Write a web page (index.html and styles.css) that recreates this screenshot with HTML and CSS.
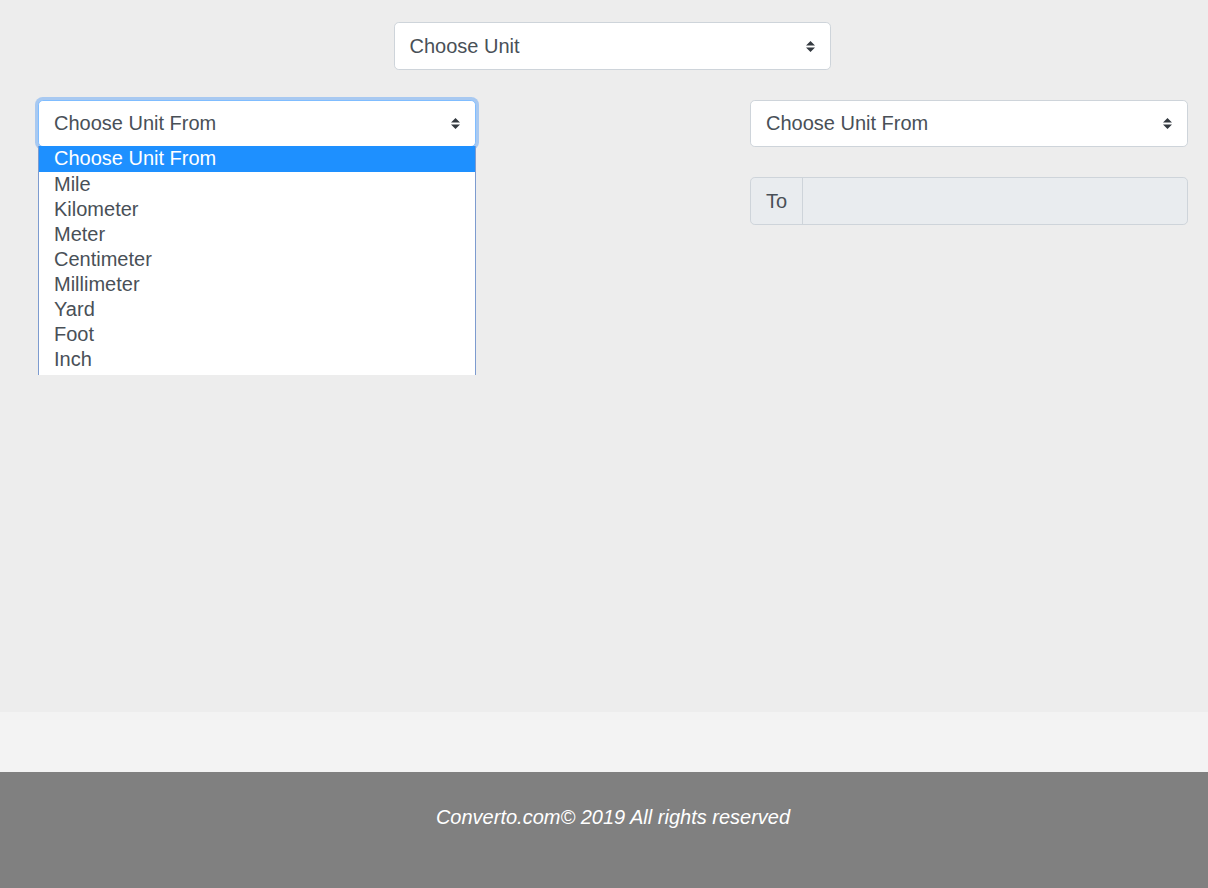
FILE: index.html
```html
<!DOCTYPE html>
<html lang="en">
<head>
<meta charset="utf-8">
<title>Converto</title>
<link rel="stylesheet" href="styles.css">
</head>
<body>
<main class="main">
  <div class="container">
    <div class="top-row">
      <div class="select select-top">
        <span class="select-text">Choose Unit</span>
        <svg class="caret" width="9" height="11" viewBox="0 0 9 11"><path d="M4.5 0 L9 4.5 H0 Z M0 6.5 H9 L4.5 11 Z" fill="#343a40"/></svg>
      </div>
    </div>
    <div class="cols">
      <div class="col">
        <div class="select focused">
          <span class="select-text">Choose Unit From</span>
          <svg class="caret" width="9" height="11" viewBox="0 0 9 11"><path d="M4.5 0 L9 4.5 H0 Z M0 6.5 H9 L4.5 11 Z" fill="#343a40"/></svg>
        </div>
        <ul class="dropdown">
          <li class="opt active">Choose Unit From</li>
          <li class="opt">Mile</li>
          <li class="opt">Kilometer</li>
          <li class="opt">Meter</li>
          <li class="opt">Centimeter</li>
          <li class="opt">Millimeter</li>
          <li class="opt">Yard</li>
          <li class="opt">Foot</li>
          <li class="opt">Inch</li>
        </ul>
      </div>
      <div class="col">
        <div class="select">
          <span class="select-text">Choose Unit From</span>
          <svg class="caret" width="9" height="11" viewBox="0 0 9 11"><path d="M4.5 0 L9 4.5 H0 Z M0 6.5 H9 L4.5 11 Z" fill="#343a40"/></svg>
        </div>
        <div class="input-group">
          <span class="prepend">To</span>
          <span class="readonly"></span>
        </div>
      </div>
    </div>
  </div>
</main>
<div class="band"></div>
<footer class="footer">
  <p class="copy">Converto.com© 2019 All rights reserved</p>
</footer>
</body>
</html>
```
FILE: styles.css
```css
* { box-sizing: border-box; }
html, body { margin: 0; padding: 0; }
body {
  background: #ededed;
  font-family: "Liberation Sans", Arial, sans-serif;
  color: #495057;
}
.main {
  height: 712px;
  padding-top: 22px;
}
.container {
  margin-left: 38px;
  width: 1150px;
}
.top-row {
  display: flex;
  justify-content: center;
  padding-right: 2px;
}
.select {
  position: relative;
  display: flex;
  align-items: center;
  justify-content: space-between;
  height: 47px;
  padding: 0 15px 1px 15px;
  background: #fff;
  border: 1px solid #ced4da;
  border-radius: 4.8px;
  font-size: 20px;
  line-height: 30px;
  color: #495057;
}
.select-top { width: 437px; height: 48px; }
.select.focused {
  border-color: #80bdff;
  box-shadow: 0 0 0 3px rgba(100, 165, 245, 0.5);
}
.caret { display: block; margin-top: 1px; }
.cols {
  display: flex;
  justify-content: space-between;
  margin-top: 30px;
}
.col {
  position: relative;
  width: 438px;
}
.dropdown {
  position: absolute;
  left: 0;
  top: 46px;
  width: 438px;
  margin: 0;
  padding: 0 0 3px;
  list-style: none;
  background: #fff;
  border-left: 1px solid #7d9bcf;
  border-right: 1px solid #7d9bcf;
  z-index: 5;
}
.opt {
  height: 25px;
  line-height: 24px;
  padding-left: 15px;
  font-size: 20px;
  color: #495057;
}
.opt.active {
  background: #1e90ff;
  color: #fff;
  height: 26px;
  line-height: 25px;
}
.input-group {
  display: flex;
  margin-top: 30px;
  height: 48px;
  border: 1px solid #ced4da;
  border-radius: 4.8px;
  background: #e9ecef;
  font-size: 20px;
}
.prepend {
  width: 52px;
  display: flex;
  align-items: center;
  justify-content: center;
  border-right: 1px solid #ced4da;
  color: #495057;
}
.readonly { flex: 1; }
.band {
  height: 60px;
  background: #f3f3f3;
}
.footer {
  height: 116px;
  background: #808080;
  padding-top: 33px;
}
.copy {
  margin: 0;
  text-align: center;
  font-style: italic;
  font-size: 20px;
  line-height: 24px;
  color: #fff;
  padding-left: 18px;
}
```
